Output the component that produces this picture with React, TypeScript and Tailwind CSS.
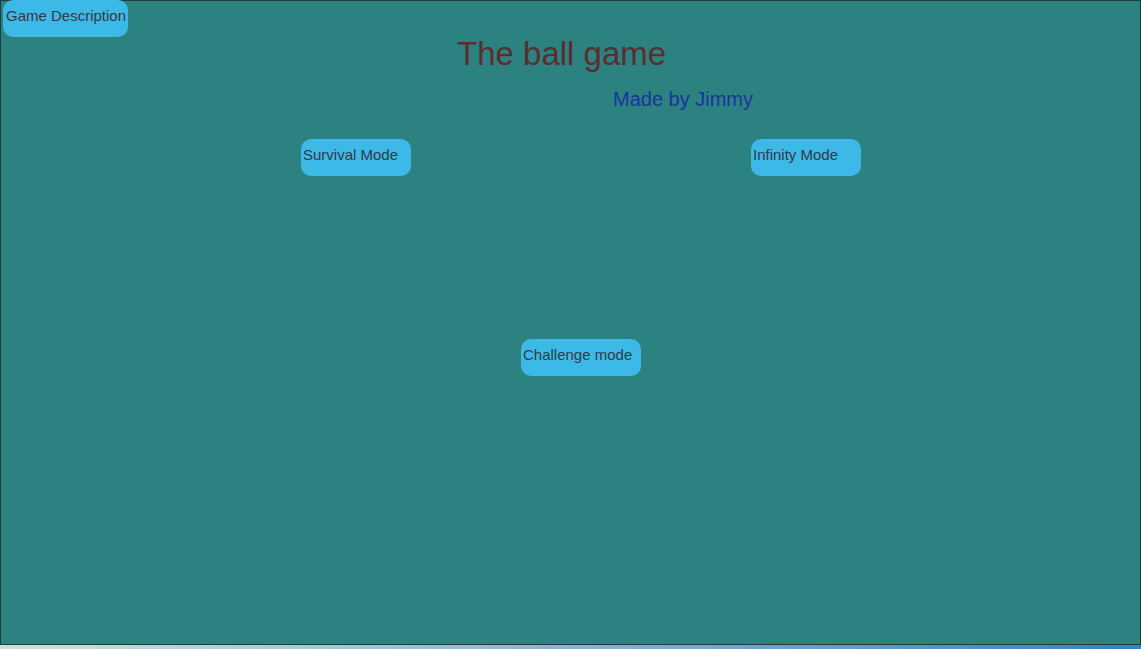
import React from "react";

const btn =
	"block rounded-[10px] bg-[#3db9e8] pt-[7px] pb-[13px] text-left text-[15px] leading-[17px] text-[#333a44]";

export default function App() {
	return (
		<div className="w-[1141px] h-[649px] overflow-hidden font-['Liberation_Sans',Arial,sans-serif]">
			<div className="h-[645px] w-[1141px] border border-[#1d3d3d] bg-[#2c8280]">
				<button className={`${btn} ml-[2px] -mt-px pl-[3px] pr-[2px]`}>
					Game Description
				</button>
				<h1 className="-mt-[1px] pl-[456px] text-[33px] leading-[36px] text-[#5c2d2e]">
					The ball game
				</h1>
				<p className="mt-[16px] pl-[612px] text-[20px] leading-[23px] text-[#1a349c]">
					Made by Jimmy
				</p>
				<div className="mt-[28px] flex pl-[300px]">
					<button className={`${btn} w-[110px] pl-[2px]`}>
						Survival Mode
					</button>
					<button className={`${btn} ml-[340px] w-[110px] pl-[2px]`}>
						Infinity Mode
					</button>
				</div>
				<div className="mt-[163px] flex pl-[520px]">
					<button className={`${btn} w-[120px] pl-[2px]`}>
						Challenge mode
					</button>
				</div>
			</div>
			<div className="h-[4px] w-full bg-gradient-to-r from-[#cfe0da] via-[#8ab4cc] to-[#3a7fc2]" />
		</div>
	);
}
